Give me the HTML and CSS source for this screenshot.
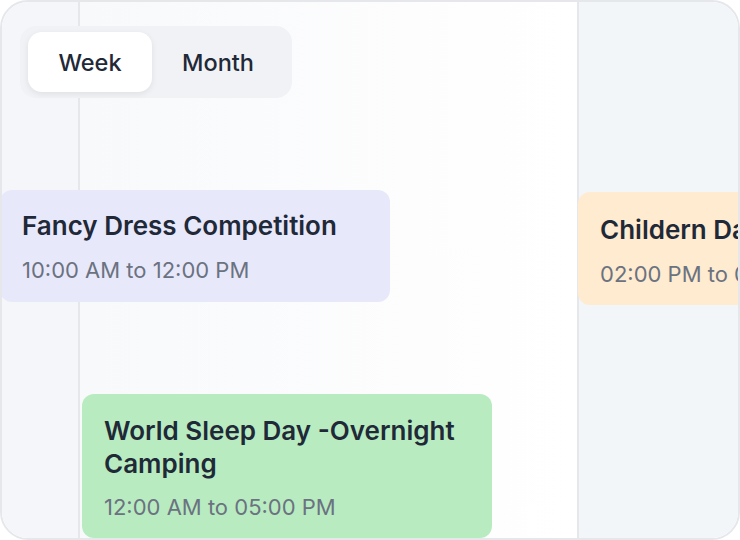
FILE: index.html
```html
<!DOCTYPE html>
<html>
<head>
<meta charset="utf-8">
<link rel="stylesheet" href="styles.css">
</head>
<body>
<div class="frame">
  <div class="col col-left"></div>
  <div class="col col-mid"></div>
  <div class="col col-right"></div>

  <div class="toggle">
    <button class="seg active">Week</button>
    <button class="seg">Month</button>
  </div>

  <div class="event ev-fancy">
    <div class="ev-title">Fancy Dress Competition</div>
    <div class="ev-time">10:00 AM to 12:00 PM</div>
  </div>
  <div class="event ev-child">
    <div class="ev-title">Childern Day</div>
    <div class="ev-time">02:00 PM to 04:00 PM</div>
  </div>
  <div class="event ev-sleep">
    <div class="ev-title">World Sleep Day -Overnight Camping</div>
    <div class="ev-time">12:00 AM to 05:00 PM</div>
  </div>
</div>
</body>
</html>
```

FILE: styles.css
```css
* { box-sizing: border-box; }
html, body { margin: 0; padding: 0; background: #ffffff; }
body { font-family: Inter, "Noto Sans", sans-serif; }

.frame {
  position: relative;
  width: 740px;
  height: 540px;
  border: 2px solid #e5e7eb;
  border-radius: 28px;
  overflow: hidden;
  display: flex;
}

.col { height: 100%; }
.col-left {
  width: 78px;
  background: #f5f6f9;
  border-right: 2px solid #e5e7eb;
}
.col-mid {
  width: 499px;
  background: linear-gradient(90deg, #f8f9fb 0%, #ffffff 100%);
  border-right: 2px solid #e5e7eb;
}
.col-right {
  flex: 1;
  background: #f3f6f8;
}

.toggle {
  position: absolute;
  left: 18px;
  top: 24px;
  width: 272px;
  height: 72px;
  padding: 6px 6px 6px 8px;
  background: #f1f2f5;
  border-radius: 16px;
  display: flex;
  gap: 4px;
}
.seg {
  width: 124px;
  height: 60px;
  border: 0;
  border-radius: 14px;
  background: transparent;
  font-family: Inter, "Noto Sans", sans-serif;
  font-size: 23.5px;
  font-weight: 500;
  color: #1f2937;
  padding: 0;
}
.seg + .seg { flex: 1; padding-right: 6px; }
.seg.active {
  background: #ffffff;
  box-shadow: 0 2px 6px rgba(17, 24, 39, 0.08);
}

.event {
  position: absolute;
  border-radius: 12px;
  padding: 20px 22px;
}
.ev-title {
  font-size: 26px;
  line-height: 32.5px;
  font-weight: 600;
  color: #1f2937;
}
.ev-time {
  margin-top: 13px;
  font-size: 22px;
  line-height: 28px;
  color: #6b7280;
}
.ev-fancy {
  left: -2px;
  top: 188px;
  width: 390px;
  height: 112px;
  background: #e8e8fb;
  padding-left: 22px;
}
.ev-child {
  left: 576px;
  top: 190px;
  width: 380px;
  height: 113px;
  background: #feebd0;
  padding-top: 22px;
  padding-left: 22px;
  white-space: nowrap;
}
.ev-sleep {
  left: 80px;
  top: 392px;
  width: 410px;
  height: 144px;
  background: #b8ecc0;
  padding-top: 21px;
}
```
